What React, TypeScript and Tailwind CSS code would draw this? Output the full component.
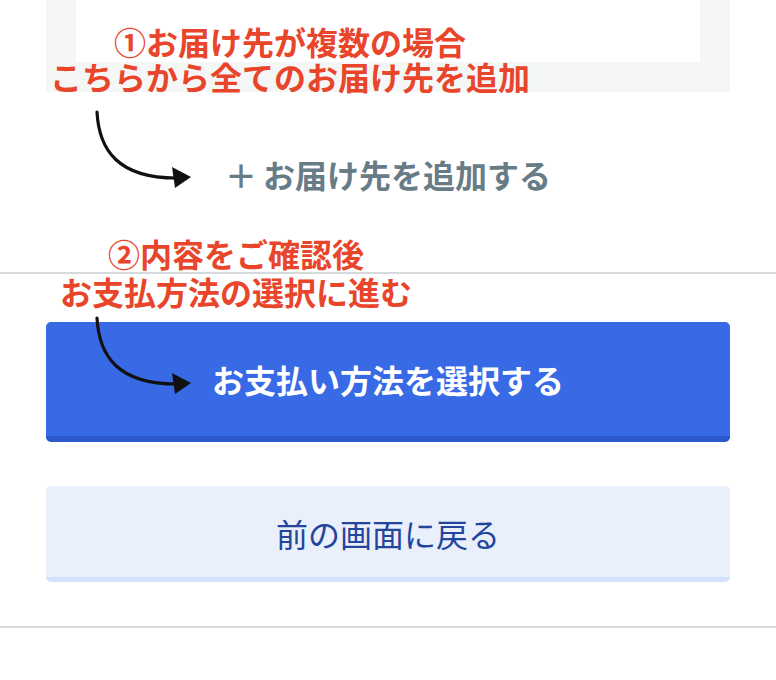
import React from 'react';

const Arrow: React.FC<{ y: number }> = ({ y }) => (
  <g transform={`translate(0 ${y})`}>
    <path
      d="M97 0 C 99 38, 118 66, 176 66"
      fill="none"
      stroke="#111"
      strokeWidth={3.2}
      strokeLinecap="round"
    />
    <polygon points="172,55 191,65 175,76" fill="#111" />
  </g>
);

const App: React.FC = () => {
  return (
    <div className="relative w-[776px] h-[680px] bg-white overflow-hidden font-['Noto_Sans_CJK_JP',sans-serif]">
      {/* address card (cut off at the top) */}
      <div className="mx-[46px] h-[92px] bg-[#f5f7f7] px-[30px]">
        <div className="h-[62px] bg-white" />
      </div>

      <div className="mt-[62px] flex justify-center">
        <button className="flex items-center gap-[6px] text-[32px] leading-[40px] font-bold text-[#687c87]">
          <span>＋</span>
          <span>お届け先を追加する</span>
        </button>
      </div>

      <div className="mt-[78px] h-[2px] bg-[#d5dadd]" />

      <div className="mx-[46px] mt-[48px] flex flex-col gap-[44px]">
        <button className="h-[120px] rounded-[5px] border-b-[6px] border-[#2c59cc] bg-[#386ae6] text-[32px] font-bold text-white">
          お支払い方法を選択する
        </button>
        <button className="h-[96px] rounded-[5px] border-b-[5px] border-[#d5e0fa] bg-[#e9effb] pt-[2px] text-[32px] text-[#24459c]">
          前の画面に戻る
        </button>
      </div>

      <div className="mt-[44px] h-[2px] bg-[#d5dadd]" />

      {/* annotations */}
      <div className="absolute left-[40px] top-[24px] w-[500px] text-center text-[32px] leading-[35px] font-bold text-[#e8452b]">
        <p>①お届け先が複数の場合</p>
        <p>こちらから全てのお届け先を追加</p>
      </div>
      <div className="absolute left-[36px] top-[234px] w-[400px] text-center text-[32px] leading-[38px] font-bold text-[#e8452b]">
        <p>②内容をご確認後</p>
        <p>お支払方法の選択に進む</p>
      </div>

      <svg className="pointer-events-none absolute inset-0" width="776" height="680" viewBox="0 0 776 680">
        <Arrow y={112} />
        <Arrow y={318} />
      </svg>
    </div>
  );
};

export default App;
